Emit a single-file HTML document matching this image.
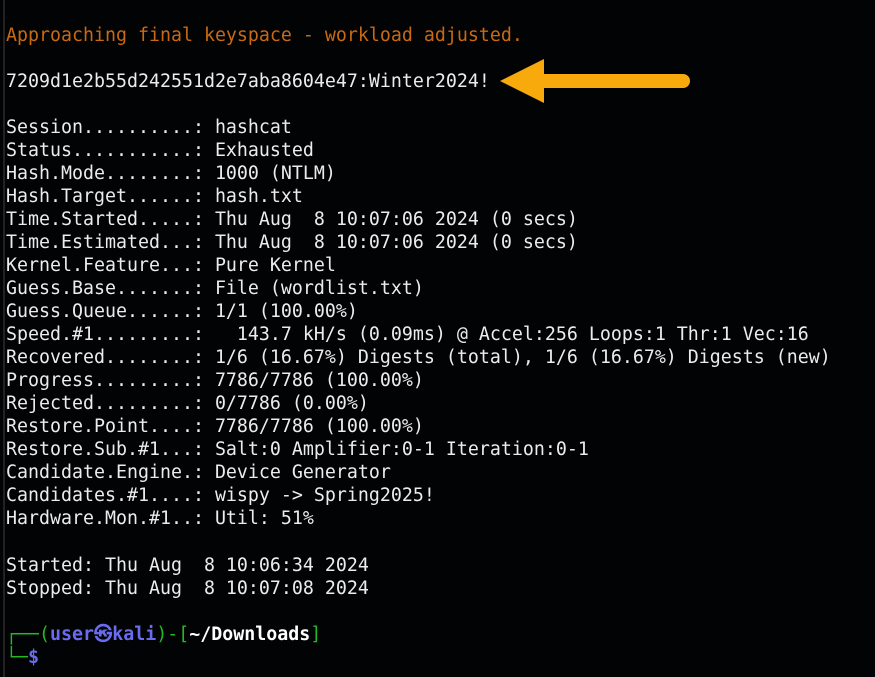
<!DOCTYPE html>
<html><head><style>
html,body{margin:0;padding:0;background:#020304;width:875px;height:677px;overflow:hidden;position:relative}
pre{position:absolute;left:6px;top:23.5px;margin:0;font-family:"DejaVu Sans Mono","Liberation Mono",monospace;font-size:18.27px;line-height:23.05px;color:#ececec;white-space:pre}
.o{color:#c96a12}.g{color:#25b825}.b{color:#6a6cf0;font-weight:bold}.w{color:#fff;font-weight:bold}
.bar{position:absolute;left:3px;top:0;width:2px;height:677px;background:#222}
</style></head><body>
<div class="bar"></div>
<pre><span class="o">Approaching final keyspace - workload adjusted.</span>

7209d1e2b55d242551d2e7aba8604e47:Winter2024!

Session..........: hashcat
Status...........: Exhausted
Hash.Mode........: 1000 (NTLM)
Hash.Target......: hash.txt
Time.Started.....: Thu Aug  8 10:07:06 2024 (0 secs)
Time.Estimated...: Thu Aug  8 10:07:06 2024 (0 secs)
Kernel.Feature...: Pure Kernel
Guess.Base.......: File (wordlist.txt)
Guess.Queue......: 1/1 (100.00%)
Speed.#1.........:   143.7 kH/s (0.09ms) @ Accel:256 Loops:1 Thr:1 Vec:16
Recovered........: 1/6 (16.67%) Digests (total), 1/6 (16.67%) Digests (new)
Progress.........: 7786/7786 (100.00%)
Rejected.........: 0/7786 (0.00%)
Restore.Point....: 7786/7786 (100.00%)
Restore.Sub.#1...: Salt:0 Amplifier:0-1 Iteration:0-1
Candidate.Engine.: Device Generator
Candidates.#1....: wispy -&gt; Spring2025!
Hardware.Mon.#1..: Util: 51%

Started: Thu Aug  8 10:06:34 2024
Stopped: Thu Aug  8 10:07:08 2024

<span class="g">┌──(</span><span class="b">user㉿kali</span><span class="g">)-[</span><span class="w">~/Downloads</span><span class="g">]</span>
<span class="g">└─</span><span class="b">$</span></pre>
<svg style="position:absolute;left:0;top:0" width="875" height="677">
<path d="M500 81 L544 59 L544 74 L683 74 A7 7 0 0 1 683 88 L544 88 L544 103 Z" fill="#f8aa0c"/>
</svg>
</body></html>
